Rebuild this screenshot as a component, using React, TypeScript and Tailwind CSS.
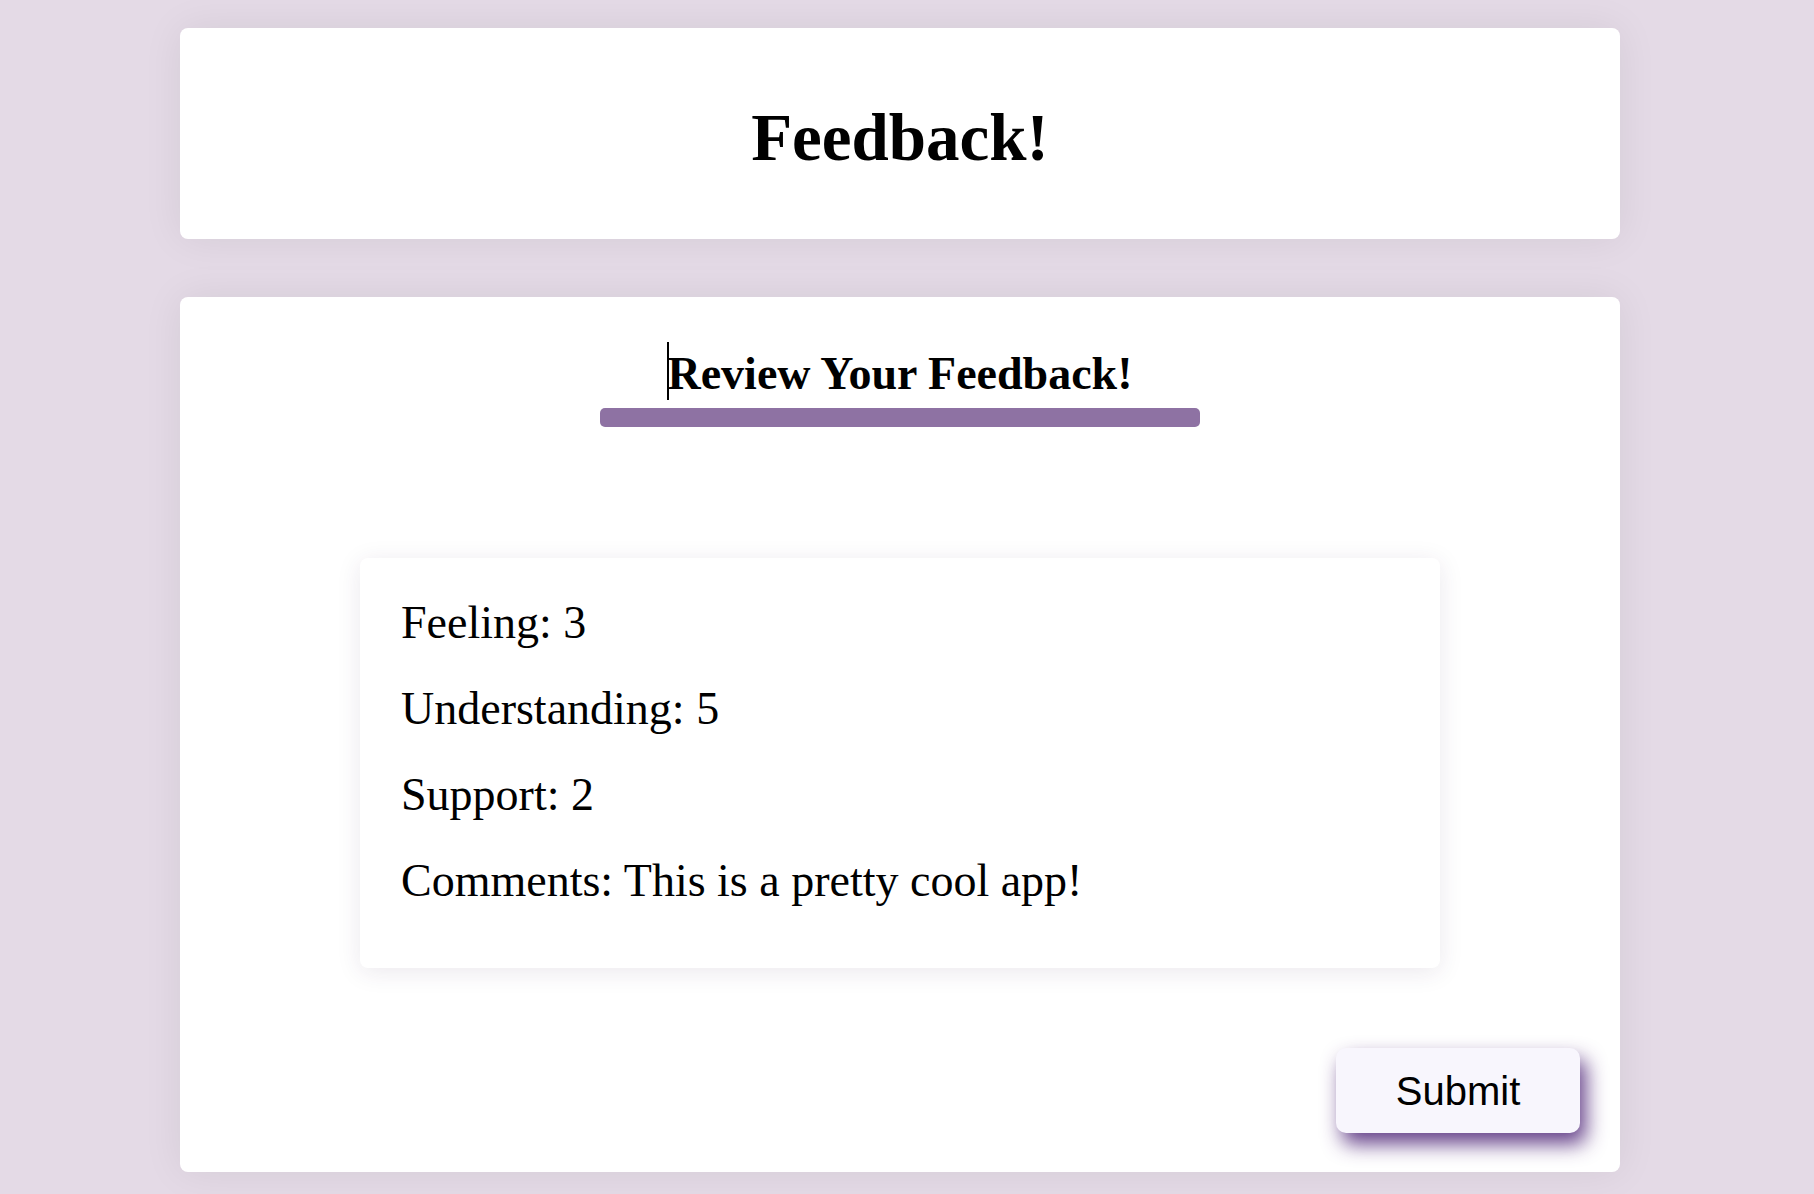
import React from "react";

export default function App() {
  const feedback = [
    { label: "Feeling", value: "3" },
    { label: "Understanding", value: "5" },
    { label: "Support", value: "2" },
    { label: "Comments", value: "This is a pretty cool app!" },
  ];

  return (
    <div className="min-h-[1194px] w-full bg-[#e4dae6] pt-[28px] pb-[22px] font-['Liberation_Serif',serif] text-black">
      {/* Header card */}
      <header className="ml-[180px] w-[1440px] h-[211px] rounded-[8px] bg-white shadow-[0_0_40px_rgba(0,0,0,0.07)] pt-[71px]">
        <h1 className="text-center text-[67px] leading-[76px] font-bold">Feedback!</h1>
      </header>

      {/* Review card */}
      <main className="mt-[58px] ml-[180px] w-[1440px] h-[875px] rounded-[8px] bg-white shadow-[0_0_40px_rgba(0,0,0,0.07)] pt-[45px] flex flex-col">
        <h2 className="text-center text-[46px] leading-[53px] font-bold">
          <span className="inline-block w-[2px] h-[58px] bg-black align-[-11px] -mr-[2px]" />
          Review Your Feedback!
        </h2>
        <div className="mx-auto mt-[8px] w-[600px] h-[19px] rounded-[5px] bg-[#8e72a3]" />

        <section className="mx-auto mt-[131px] w-[1080px] h-[410px] rounded-[8px] bg-white shadow-[0_4px_24px_rgba(60,30,80,0.1)] pl-[41px] pt-[22px]">
          {feedback.map((item) => (
            <p key={item.label} className="text-[46px] leading-[86px]">
              {item.label}: {item.value}
            </p>
          ))}
        </section>

        <div className="flex justify-end pr-[40px] mt-[80px]">
          <button className="w-[244px] h-[85px] rounded-[10px] bg-[#f8f6fd] font-['Liberation_Sans',Arial,sans-serif] text-[40px] text-black shadow-[6px_11px_20px_rgba(85,45,125,0.9)]">
            Submit
          </button>
        </div>
      </main>
    </div>
  );
}
